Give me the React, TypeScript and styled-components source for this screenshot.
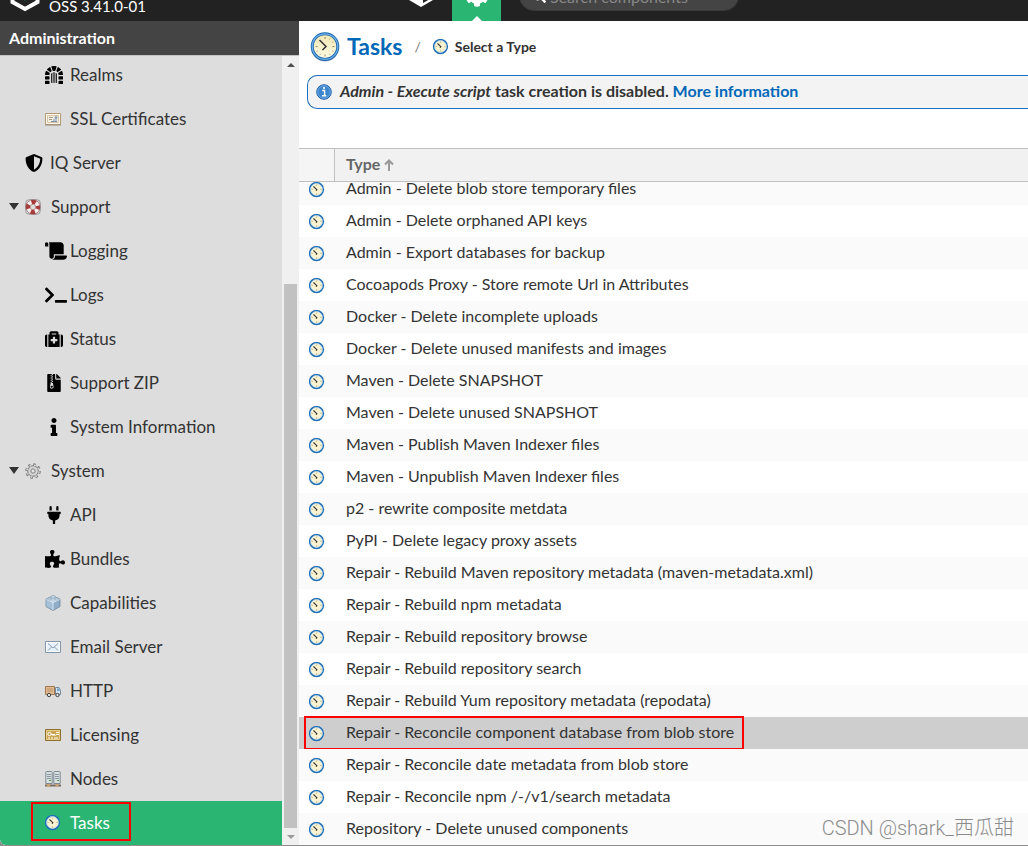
import React from 'react';
import styled, { createGlobalStyle } from 'styled-components';
import {
  FaDungeon, FaShieldAlt, FaScroll, FaTerminal, FaMedkit, FaFileArchive,
  FaInfo, FaPlug, FaPuzzlePiece, FaCog, FaSearch,
} from 'react-icons/fa';

const GlobalStyle = createGlobalStyle`
  * { box-sizing: border-box; }
  body {
    margin: 0;
    background: #fff;
    color: #333;
    font-family: Lato, "Noto Sans CJK SC", sans-serif;
  }
  a { color: inherit; text-decoration: none; }
`;

const Page = styled.div`
  display: flex;
  flex-direction: column;
  height: 100vh;
  overflow: hidden;
  position: relative;
  background: #8d8d8d;
  padding-bottom: 1px;
`;

const TopBar = styled.header`
  flex: none;
  display: flex;
  align-items: flex-end;
  height: 21px;
  overflow: hidden;
  background: #222;
  color: #fff;
`;

const Brand = styled.div`
  display: flex;
  align-items: flex-end;
  width: 389px;
  padding-left: 9px;
  gap: 8px;
`;

const Version = styled.span`
  font-size: 15px;
  line-height: 18px;
  padding-bottom: 6px;
`;

const LogoArt = styled.svg`
  display: block;
  margin-bottom: 9px;
`;

const ModeButton = styled.button<{ $active?: boolean }>`
  display: flex;
  align-items: flex-end;
  justify-content: center;
  position: relative;
  width: ${(p) => (p.$active ? 49 : 63)}px;
  height: 49px;
  padding: 0 0 14px;
  border: 0;
  color: #fff;
  background: ${(p) => (p.$active ? '#2ab573' : 'transparent')};

  &::after {
    content: '';
    display: ${(p) => (p.$active ? 'block' : 'none')};
    position: absolute;
    bottom: 0;
    left: 50%;
    margin-left: -5px;
    border: 5px solid transparent;
    border-top: 0;
    border-bottom-color: #fff;
  }
`;

const SearchBox = styled.label`
  display: flex;
  align-items: center;
  gap: 4px;
  width: 220px;
  height: 30px;
  margin: 0 0 10px 18px;
  padding: 0 12px;
  border: 1px solid #3a3a3a;
  border-radius: 15px;
  background: #444;
`;

const SearchInput = styled.input`
  flex: 1;
  min-width: 0;
  padding: 0;
  border: 0;
  background: transparent;
  color: #fff;
  font: 16px Lato, sans-serif;
  &::placeholder { color: #888; opacity: 1; }
`;

const Body = styled.div`
  flex: 1;
  min-height: 0;
  display: flex;
  background: #fff;
  border-bottom-left-radius: 6px;
  overflow: hidden;
`;

const Sidebar = styled.aside`
  flex: none;
  width: 299px;
  display: flex;
  flex-direction: column;
  background: #ddd;
`;

const SidebarTitle = styled.h2`
  margin: 0;
  padding: 0 9px;
  background: #444;
  color: #fff;
  border-bottom: 1px solid #c4c4c4;
  font-size: 16px;
  line-height: 34px;
`;

const TreeArea = styled.div`
  flex: 1;
  min-height: 0;
  display: flex;
`;

const Tree = styled.nav`
  flex: 1;
  display: flex;
  flex-direction: column;
  justify-content: flex-end;
  overflow: hidden;
`;

const TreeLink = styled.a<{ $level: number; $active?: boolean }>`
  flex: none;
  position: relative;
  display: flex;
  align-items: center;
  height: 44px;
  padding: 0 0 2px ${(p) => [9, 25, 45][p.$level]}px;
  background: ${(p) => (p.$active ? '#2ab573' : 'transparent')};
  color: ${(p) => (p.$active ? '#fff' : '#333')};
  font-size: 17px;
`;

const Caret = styled.span`
  width: 16px;
  &::before {
    content: '';
    display: block;
    width: 0;
    border: 5px solid transparent;
    border-top: 7px solid #333;
    border-bottom: 0;
  }
`;

const TreeIcon = styled.span<{ $wide?: boolean }>`
  display: flex;
  width: ${(p) => (p.$wide ? 26 : 25)}px;
  padding-top: 2px;
  color: #000;
  svg { display: block; flex: none; }
`;

const Scrollbar = styled.div`
  flex: none;
  width: 17px;
  display: flex;
  flex-direction: column;
  align-items: center;
  background: #f0f0f0;
`;

const ScrollArrow = styled.span<{ $down?: boolean }>`
  flex: none;
  display: flex;
  align-items: center;
  height: 17px;
  &::before {
    content: '';
    border: 4px solid transparent;
    border-top: ${(p) => (p.$down ? '4px solid #999' : '0')};
    border-bottom: ${(p) => (p.$down ? '0' : '4px solid #505050')};
  }
`;

const ScrollTrack = styled.div`
  flex: 1;
  display: flex;
  flex-direction: column;
  justify-content: flex-end;
`;

const ScrollThumb = styled.div`
  width: 13px;
  height: 72%;
  background: #c1c1c1;
`;

const Content = styled.main`
  flex: 1;
  min-width: 0;
  display: flex;
  flex-direction: column;
`;

const Crumbs = styled.div`
  flex: none;
  display: flex;
  align-items: center;
  height: 54px;
  padding: 0 0 3px 11px;
`;

const CrumbTitle = styled.h1`
  margin: 0 12px 0 7px;
  padding-bottom: 2px;
  color: #0068b8;
  font-size: 23px;
  line-height: 28px;
`;

const CrumbSlash = styled.span`
  margin-right: 12px;
  color: #777;
  font-size: 14px;
`;

const CrumbCurrent = styled.span`
  margin-left: 6px;
  font-size: 14px;
  font-weight: 700;
`;

const Notice = styled.p`
  flex: none;
  display: flex;
  align-items: center;
  gap: 8px;
  height: 34px;
  margin: 0 0 39px 8px;
  padding-left: 8px;
  border: 1px solid #1c6fc0;
  border-right: 0;
  border-radius: 10px 0 0 10px;
  background: #f3f3f3;
  font-size: 16px;
  font-weight: 700;
  a { color: #0068b8; }
`;

const NoticeText = styled.span`
  padding-bottom: 3px;
`;

const Grid = styled.table`
  flex: 1;
  min-height: 0;
  display: flex;
  flex-direction: column;
`;

const GridHead = styled.thead`
  flex: none;
  display: block;
  border: solid #c0c0c0;
  border-width: 1px 0;
  background: #f1f1f1;
`;

const HeadRow = styled.tr`
  display: grid;
  grid-template-columns: 36px 1fr;
  height: 32px;
`;

const HeadCell = styled.th`
  display: flex;
  align-items: center;
  gap: 4px;
  padding: 0 0 3px 11px;
  color: #666;
  font-size: 16px;
  &:first-child { border-right: 1px solid #c0c0c0; background: #f5f5f5; }
  svg { margin-top: 2px; }
`;

const GridBody = styled.tbody`
  flex: 1;
  min-height: 0;
  display: flex;
  flex-direction: column;
  justify-content: flex-end;
  overflow: hidden;
`;

const Row = styled.tr<{ $selected?: boolean }>`
  flex: none;
  position: relative;
  display: grid;
  grid-template-columns: 36px 1fr;
  height: 32px;
  background: #fff;
  &:nth-child(odd) { background: #fafafa; }
  ${(p) => p.$selected && '&& { background: #cecece; }'}
`;

const Cell = styled.td`
  display: flex;
  align-items: center;
  padding: 0 0 4px 11px;
  font-size: 16px;
  &:first-child { padding: 1px 0 0 10px; }
`;

const RowMark = styled.div`
  position: absolute;
  top: -1px;
  left: 5px;
  width: 440px;
  height: 34px;
  border: 2px solid #f00;
`;

const LinkMark = styled.span`
  position: absolute;
  top: 1px;
  left: 31px;
  width: 100px;
  height: 39px;
  border: 2px solid #f00;
`;

const Watermark = styled.div`
  position: absolute;
  right: 14px;
  bottom: 5px;
  color: #8c8c8c;
  font: 300 20px/26px Roboto, "Noto Sans CJK SC", sans-serif;
`;

function ClockIcon({ size = 16 }: { size?: number }) {
  return (
    <svg width={size} height={size} viewBox="0 0 16 16" aria-hidden="true">
      <circle cx="7.500" cy="7.500" r="6.900" fill="#fbf3cf" stroke="#1f6fb8" strokeWidth="1.5" />
      <circle cx="7.500" cy="7.500" r="5.800" fill="none" stroke="#a9d0ef" strokeWidth=".7" />
      <path d="M7.500 2.700v1M7.500 11.400v1M2.700 7.500h1M11.400 7.500h1" stroke="#8d8868" strokeWidth=".7" />
      <path d="M4.500 4.500l3.400 3.200-1 1" fill="none" stroke="#333" strokeWidth="1.1" />
    </svg>
  );
}

function BigClockIcon() {
  return (
    <svg width="30" height="30" viewBox="0 0 30 30" aria-hidden="true">
      <defs>
        <linearGradient id="face" x1="0" y1="0" x2="0" y2="1">
          <stop offset="0" stopColor="#f0e6b0" />
          <stop offset="1" stopColor="#fffbe6" />
        </linearGradient>
      </defs>
      <circle cx="15" cy="15.6" r="14" fill="#a8b4c0" />
      <circle cx="15" cy="14.6" r="12.8" fill="url(#face)" stroke="#1c66ad" strokeWidth="3" />
      <circle cx="15" cy="14.6" r="12.8" fill="none" stroke="#6fb2ea" strokeWidth="1.2" />
      <path d="M15 5v2M15 22.500v2M5.500 14.600h2M22.500 14.600h2" stroke="#8c8668" />
      <path d="M20 6.500l-.5.900M23.300 9.800l-.9.500M23.300 19.400l-.9-.5M20 22.700l-.5-.9M10 22.700l.5-.9M6.700 19.400l.9-.5" stroke="#8c8668" />
      <path d="M9.500 8l6.500 6.500-3.500 3.500" fill="none" stroke="#333" strokeWidth="1.500" />
    </svg>
  );
}

function CardIcon() {
  return (
    <svg width="16" height="16" viewBox="0 0 16 16" aria-hidden="true">
      <path d="M.5 2.500h15v11H.5z" fill="#fdf8ee" stroke="#b49a72" />
      <path d="M0 14h16" stroke="#9a8c78" />
      <path d="M2.500 4.500h11v7h-11z" fill="#f5efe2" stroke="#d2c4a8" />
      <path d="M4 6.500h4M4 8.500h3" stroke="#a79c88" />
      <circle cx="11" cy="6.500" r="1.500" fill="#8f9fb5" />
      <path d="M6 10.500h6M8 9h4" stroke="#7d8fae" />
    </svg>
  );
}

function LicenseIcon() {
  return (
    <svg width="16" height="16" viewBox="0 0 16 16" aria-hidden="true">
      <path d="M.5 2.500h15v11H.5z" fill="#d8b96a" stroke="#8f6f2c" />
      <path d="M1.500 3.500h13v9h-13z" fill="#c9a552" stroke="#e7d08e" />
      <circle cx="4.500" cy="7" r="1.700" fill="none" stroke="#fff" />
      <path d="M6 7.500h4v1.500M8 7.500v1.500M11 5.500h3M11 7.500h3M3 11h2M6 11h2M9 11h4" fill="none" stroke="#fff" />
    </svg>
  );
}

function LifebuoyIcon() {
  return (
    <svg width="16" height="16" viewBox="0 0 16 16" aria-hidden="true">
      <rect x=".8" y=".8" width="14.400" height="14.400" rx="3" fill="none" stroke="#999" />
      <circle cx="8" cy="8" r="5" fill="none" stroke="#f6eeee" strokeWidth="4.400" />
      <circle cx="8" cy="8" r="5" fill="none" stroke="#a83a3a" strokeWidth="4.400" strokeDasharray="4.300 3.554" strokeDashoffset="2.150" />
      <circle cx="8" cy="8" r="7.200" fill="none" stroke="#8b5050" strokeWidth=".6" />
      <circle cx="8" cy="8" r="2.800" fill="#ddd" stroke="#a06060" strokeWidth=".6" />
    </svg>
  );
}

function GearIcon() {
  return (
    <svg width="16" height="16" viewBox="0 0 16 16" aria-hidden="true">
      <circle cx="8" cy="8" r="6.600" fill="none" stroke="#7d7d7d" strokeWidth="2.400" strokeDasharray="2.600 2.584" />
      <circle cx="8" cy="8" r="5.300" fill="#d4d4d4" stroke="#7d7d7d" />
      <circle cx="8" cy="8" r="6" fill="none" stroke="#d4d4d4" strokeWidth="1.800" strokeDasharray="1.400 3.312" strokeDashoffset="-.5" />
      <circle cx="8" cy="8" r="2.200" fill="#ccc" stroke="#8a8a8a" />
      <circle cx="8" cy="8" r="1" fill="#eee" />
    </svg>
  );
}

function BrickIcon() {
  return (
    <svg width="16" height="16" viewBox="0 0 16 16" aria-hidden="true">
      <path d="M8 1l7 3v7.500l-7 4-7-4V4z" fill="#8fadc6" stroke="#6b87a0" strokeWidth=".8" />
      <path d="M1 4.200l7 3.200 7-3.200L8 1z" fill="#bfd4e4" />
      <path d="M1.400 4.800L8 7.800v7.200l-6.600-3.700z" fill="#a6c1d7" />
      <path d="M8 7.800V15M1.400 4.500L8 7.600l6.600-3.100" fill="none" stroke="#e6f0f7" strokeWidth=".8" />
      <ellipse cx="8" cy="2" rx="2.600" ry="1.200" fill="#d5e4ef" stroke="#7b98b0" strokeWidth=".7" />
      <ellipse cx="4.500" cy="4" rx="2" ry="1" fill="#d5e4ef" stroke="#7b98b0" strokeWidth=".6" />
      <ellipse cx="11.500" cy="4" rx="2" ry="1" fill="#d5e4ef" stroke="#7b98b0" strokeWidth=".6" />
    </svg>
  );
}

function MailIcon() {
  return (
    <svg width="16" height="16" viewBox="0 0 16 16" aria-hidden="true">
      <path d="M.5 2.500h15v11H.5z" fill="#e8f1f9" stroke="#8096ab" />
      <path d="M1.500 3.500h13v9h-13z" fill="none" stroke="#fff" />
      <path d="M3 4.500l5 4.500 5-4.500M3 11.500L6.500 8M13 11.500L9.500 8" fill="none" stroke="#8ba0b4" />
    </svg>
  );
}

function TruckIcon() {
  return (
    <svg width="16" height="16" viewBox="0 0 16 16" aria-hidden="true">
      <path d="M.5 3.500h9v8h-9z" fill="#e2bd94" stroke="#a07850" />
      <path d="M2 6h6M2 8h6" stroke="#b98f65" />
      <path d="M10.500 4.500h3.500l1.500 3v4h-5z" fill="#d9e4ec" stroke="#76899a" />
      <path d="M12 5.500h2l.8 2.500H12z" fill="#6da7d6" />
      <circle cx="4" cy="12" r="1.700" fill="#ddd" stroke="#444" />
      <circle cx="12.500" cy="12" r="1.700" fill="#ddd" stroke="#444" />
    </svg>
  );
}

function NodesIcon() {
  return (
    <svg width="16" height="16" viewBox="0 0 16 16" aria-hidden="true">
      <path d="M.8 1.200q0-.7.700-.7H6.500q.7 0 .7.700V12.500H.8zM8.800 1.200q0-.7.700-.7H14.500q.7 0 .7.700V12.500H8.800z" fill="#d8e0e4" stroke="#7e8a92" />
      <path d="M2 3.500h4M2 5.500h4M2 7.500h4M10 3.500h4M10 5.500h4M10 7.500h4" stroke="#8b979f" />
      <path d="M4 9.500h2M12 9.500h2" stroke="#4d9a3a" />
      <path d="M0 14.500h16" stroke="#776b60" strokeWidth="2" />
      <path d="M2 14.500h3M10.500 14.500h3" stroke="#d7a265" strokeWidth="2" />
    </svg>
  );
}

function NoticeIcon() {
  return (
    <svg width="16" height="16" viewBox="0 0 16 16" aria-hidden="true">
      <circle cx="8" cy="8" r="7.300" fill="#3d86cf" stroke="#1f5fa6" />
      <circle cx="8" cy="8" r="6.300" fill="none" stroke="#8dbbe8" strokeWidth=".7" />
      <path d="M6.200 6.500H8.600V11.500M6 11.700h4.300" fill="none" stroke="#fff" strokeWidth="1.400" />
      <circle cx="8" cy="4" r="1.100" fill="#fff" />
    </svg>
  );
}

const treeItems = [
  { label: 'Realms', level: 2, icon: <FaDungeon size={18} /> },
  { label: 'SSL Certificates', level: 2, icon: <CardIcon /> },
  { label: 'IQ Server', level: 1, icon: <FaShieldAlt size={18} /> },
  { label: 'Support', level: 0, icon: <LifebuoyIcon /> },
  { label: 'Logging', level: 2, icon: <FaScroll size={22} height={18} /> },
  { label: 'Logs', level: 2, icon: <FaTerminal size={22} height={18} /> },
  { label: 'Status', level: 2, icon: <FaMedkit size={18} /> },
  { label: 'Support ZIP', level: 2, icon: <FaFileArchive size={18} /> },
  { label: 'System Information', level: 2, icon: <FaInfo size={18} /> },
  { label: 'System', level: 0, icon: <GearIcon /> },
  { label: 'API', level: 2, icon: <FaPlug size={18} /> },
  { label: 'Bundles', level: 2, icon: <FaPuzzlePiece size={20} /> },
  { label: 'Capabilities', level: 2, icon: <BrickIcon /> },
  { label: 'Email Server', level: 2, icon: <MailIcon /> },
  { label: 'HTTP', level: 2, icon: <TruckIcon /> },
  { label: 'Licensing', level: 2, icon: <LicenseIcon /> },
  { label: 'Nodes', level: 2, icon: <NodesIcon /> },
  { label: 'Tasks', level: 2, icon: <ClockIcon />, active: true },
];

const selectedType = 'Repair - Reconcile component database from blob store';

const taskTypes = [
  'Admin - Delete blob store temporary files',
  'Admin - Delete orphaned API keys',
  'Admin - Export databases for backup',
  'Cocoapods Proxy - Store remote Url in Attributes',
  'Docker - Delete incomplete uploads',
  'Docker - Delete unused manifests and images',
  'Maven - Delete SNAPSHOT',
  'Maven - Delete unused SNAPSHOT',
  'Maven - Publish Maven Indexer files',
  'Maven - Unpublish Maven Indexer files',
  'p2 - rewrite composite metdata',
  'PyPI - Delete legacy proxy assets',
  'Repair - Rebuild Maven repository metadata (maven-metadata.xml)',
  'Repair - Rebuild npm metadata',
  'Repair - Rebuild repository browse',
  'Repair - Rebuild repository search',
  'Repair - Rebuild Yum repository metadata (repodata)',
  selectedType,
  'Repair - Reconcile date metadata from blob store',
  'Repair - Reconcile npm /-/v1/search metadata',
  'Repository - Delete unused components',
];

export default function App() {
  return (
    <Page>
      <GlobalStyle />
      <TopBar>
        <Brand>
          <LogoArt width="32" height="34" viewBox="0 0 32 34" aria-hidden="true">
            <path d="M16 3l12.500 7v14L16 31 3.500 24V10z" fill="none" stroke="#fff" strokeWidth="4" />
            <path d="M16 18l4 2-4 2.500-4-2.500z" fill="#2ab573" />
          </LogoArt>
          <Version>OSS 3.41.0-01</Version>
        </Brand>
        <ModeButton aria-label="Browse">
          <svg width="26" height="26" viewBox="0 0 26 26" aria-hidden="true">
            <path d="M13 0l12 6v13l-12 7-12-7V6z" fill="#fff" />
            <path d="M15 14l7-3v7l-7 4z" fill="#222" />
          </svg>
        </ModeButton>
        <ModeButton $active aria-label="Administration"><FaCog size={24} /></ModeButton>
        <SearchBox>
          <FaSearch size={14} />
          <SearchInput aria-label="Search components" placeholder="Search components" />
        </SearchBox>
      </TopBar>
      <Body>
        <Sidebar>
          <SidebarTitle>Administration</SidebarTitle>
          <TreeArea>
            <Tree>
              {treeItems.map((item) => (
                <TreeLink key={item.label} href="#" $level={item.level} $active={item.active}>
                  {item.level === 0 && <Caret />}
                  <TreeIcon $wide={item.level === 0}>{item.icon}</TreeIcon>
                  {item.label}
                  {item.active && <LinkMark />}
                </TreeLink>
              ))}
            </Tree>
            <Scrollbar aria-hidden="true">
              <ScrollArrow />
              <ScrollTrack><ScrollThumb /></ScrollTrack>
              <ScrollArrow $down />
            </Scrollbar>
          </TreeArea>
        </Sidebar>
        <Content>
          <Crumbs>
            <BigClockIcon />
            <CrumbTitle>Tasks</CrumbTitle>
            <CrumbSlash>/</CrumbSlash>
            <ClockIcon />
            <CrumbCurrent>Select a Type</CrumbCurrent>
          </Crumbs>
          <Notice>
            <NoticeIcon />
            <NoticeText>
              <em>Admin - Execute script</em> task creation is disabled. <a href="#">More information</a>
            </NoticeText>
          </Notice>
          <Grid>
            <GridHead>
              <HeadRow>
                <HeadCell aria-label="Icon" />
                <HeadCell>
                  Type
                  <svg width="10" height="12" viewBox="0 0 10 12" aria-hidden="true">
                    <path d="M5 12V2M1 5.500l4-4 4 4" fill="none" stroke="#999" strokeWidth="2" />
                  </svg>
                </HeadCell>
              </HeadRow>
            </GridHead>
            <GridBody>
              {taskTypes.map((type) => (
                <Row key={type} $selected={type === selectedType}>
                  <Cell><ClockIcon /></Cell>
                  <Cell>
                    {type}
                    {type === selectedType && <RowMark />}
                  </Cell>
                </Row>
              ))}
            </GridBody>
          </Grid>
        </Content>
      </Body>
      <Watermark>CSDN @shark_西瓜甜</Watermark>
    </Page>
  );
}
